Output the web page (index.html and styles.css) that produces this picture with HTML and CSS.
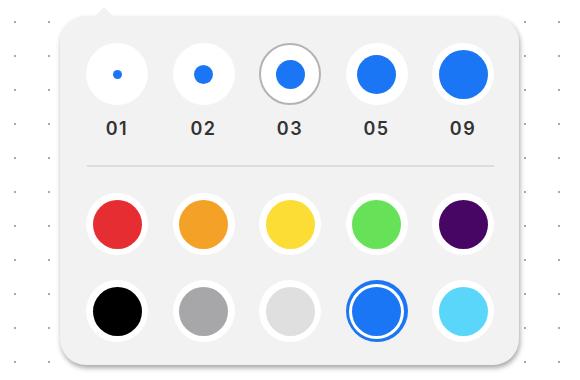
FILE: index.html
```html
<!DOCTYPE html>
<html lang="en">
<head>
  <meta charset="UTF-8" />
  <title>Brush picker</title>
  <link rel="stylesheet" href="styles.css">
</head>
<body>

  <!-- Popover -->
  <div class="picker">

    <!-- Brush sizes -->
    <div class="sizes">
      <div class="size">
        <div class="swatch"><span class="dot" style="width: 9px; height: 9px;"></span></div>
        <div class="label">01</div>
      </div>
      <div class="size">
        <div class="swatch"><span class="dot" style="width: 19px; height: 19px;"></span></div>
        <div class="label">02</div>
      </div>
      <div class="size">
        <div class="swatch active"><span class="dot" style="width: 29px; height: 29px;"></span></div>
        <div class="label">03</div>
      </div>
      <div class="size">
        <div class="swatch"><span class="dot" style="width: 39px; height: 39px;"></span></div>
        <div class="label">05</div>
      </div>
      <div class="size">
        <div class="swatch"><span class="dot" style="width: 49px; height: 49px;"></span></div>
        <div class="label">09</div>
      </div>
    </div>

    <div class="divider"></div>

    <!-- Colours -->
    <div class="colors">
      <div class="color"><span class="fill red"></span></div>
      <div class="color"><span class="fill orange"></span></div>
      <div class="color"><span class="fill yellow"></span></div>
      <div class="color"><span class="fill green"></span></div>
      <div class="color"><span class="fill purple"></span></div>
      <div class="color"><span class="fill black"></span></div>
      <div class="color"><span class="fill grey"></span></div>
      <div class="color"><span class="fill light"></span></div>
      <div class="color selected"><span class="fill blue"></span></div>
      <div class="color"><span class="fill cyan"></span></div>
    </div>

  </div>

</body>
</html>
```

FILE: styles.css
```css
body {
  margin: 0;
  padding: 16px 0 0 60px;
  height: 380px;
  box-sizing: border-box;
  font-family: Inter, "DejaVu Sans", sans-serif;
  background-color: #fff;
  background-image: radial-gradient(circle, #aaa 1px, transparent 1.5px);
  background-size: 34px 34px;
  background-position: -2px 5px;
  overflow: hidden;
}

/* Popover */
.picker {
  position: relative;
  width: 459px;
  height: 349px;
  box-sizing: border-box;
  padding: 27px 25px 0 26px;
  background: #f2f2f2;
  border-radius: 26px;
  box-shadow: 1px 3px 5px rgba(0, 0, 0, 0.35);
}

/* little arrow on top */
.picker::before {
  content: "";
  position: absolute;
  top: -9px;
  left: 35px;
  border-left: 9px solid transparent;
  border-right: 9px solid transparent;
  border-bottom: 9px solid #f2f2f2;
}

.sizes, .colors {
  display: grid;
  grid-template-columns: repeat(5, 62px);
  column-gap: 24.5px;
}

.size {
  display: flex;
  flex-direction: column;
  align-items: center;
}

.swatch, .color {
  width: 62px;
  height: 62px;
  box-sizing: border-box;
  border-radius: 50%;
  background: #fff;
  display: flex;
  align-items: center;
  justify-content: center;
}

.swatch.active {
  border: 2.5px solid #b3b3b3;
}

.dot {
  display: block;
  border-radius: 50%;
  background: #1b76f6;
}

.label {
  margin-top: 14px;
  line-height: 20px;
  font-size: 18px;
  font-weight: 600;
  letter-spacing: 1.5px;
  color: #333;
}

.divider {
  height: 2px;
  margin: 26px 0 26px 1px;
  width: 407px;
  background: #dcdcdc;
}

.colors {
  row-gap: 25px;
}

.fill {
  display: block;
  width: 49px;
  height: 49px;
  border-radius: 50%;
}

.color.selected {
  background: #1b76f6;
}

.color.selected .fill {
  box-shadow: 0 0 0 3px #fff;
}

.red { background: #e52d32; }
.orange { background: #f4a128; }
.yellow { background: #fcdd36; }
.green { background: #67e258; }
.purple { background: #470663; }
.black { background: #000; }
.grey { background: #a7a7a9; }
.light { background: #dfdfdf; }
.blue { background: #1b76f6; }
.cyan { background: #5bd6fb; }
```
